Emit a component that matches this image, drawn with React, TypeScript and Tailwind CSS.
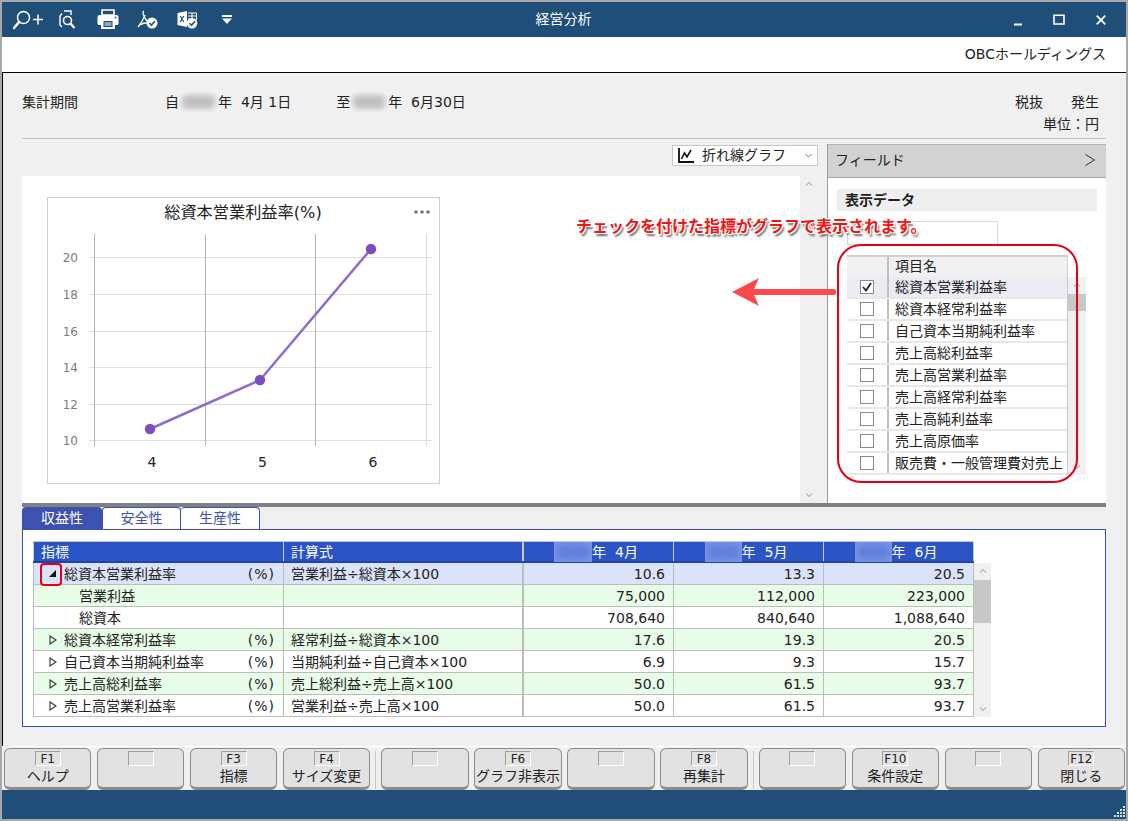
import React from 'react';

// ---- small helpers ----

function Blur({ width }: { width: string }) {
  return (
    <span className={`inline-block h-[20px] overflow-hidden bg-[#f5f5f5] align-middle ${width}`}>
      <span className="m-[3px] block h-[14px] bg-[#bdbdbd] blur-[3px]" />
    </span>
  );
}

function HeadBlur({ width }: { width: string }) {
  return (
    <span className={`inline-block h-[20px] overflow-hidden bg-[#7b95e4] align-middle ${width}`}>
      <span className="m-[3px] block h-[14px] bg-[#5f7fdc] blur-[3px]" />
    </span>
  );
}

function ScrollBar({ thumbTop, thumbHeight, width }: { thumbTop: number; thumbHeight: number; width: string }) {
  return (
    <div className={`relative h-full shrink-0 bg-[#f0f0f0] ${width}`}>
      <svg className="absolute left-1/2 top-[5px] -ml-[4px]" width="8" height="6" viewBox="0 0 8 6">
        <path d="M1 4.5 L4 1.5 L7 4.5" fill="none" stroke="#b4b4b4" strokeWidth="1.2" />
      </svg>
      {thumbHeight > 0 && (
        <div className="absolute left-0 right-0 bg-[#c8c8c8]" style={{ top: thumbTop, height: thumbHeight }} />
      )}
      <svg className="absolute bottom-[5px] left-1/2 -ml-[4px]" width="8" height="6" viewBox="0 0 8 6">
        <path d="M1 1.5 L4 4.5 L7 1.5" fill="none" stroke="#b4b4b4" strokeWidth="1.2" />
      </svg>
    </div>
  );
}

// ---- title bar icons ----

function TitleIcons() {
  return (
    <div className="flex flex-1 basis-0 items-center pl-[11px]">
      <svg width="31" height="22" viewBox="0 0 31 22" fill="none" stroke="#fff">
        <circle cx="10.5" cy="8.5" r="6" strokeWidth="1.5" />
        <path d="M6 13 L1 19" strokeWidth="2.6" strokeLinecap="round" />
        <path d="M20 10.5 H30 M25 5.5 V15.5" strokeWidth="1.5" />
      </svg>
      <svg className="ml-[15px]" width="17" height="20" viewBox="0 0 17 20" fill="none" stroke="#fff">
        <path d="M5 1 H12 V5 M3 3.5 L1 6 V15 L3 17" strokeWidth="1.4" />
        <circle cx="8.5" cy="10.5" r="4" strokeWidth="1.6" />
        <path d="M11.5 13.5 L15.5 18" strokeWidth="2.2" />
      </svg>
      <svg className="ml-[21px]" width="22" height="21" viewBox="0 0 22 21">
        <path d="M5 1 H17 V6 H5 Z" fill="none" stroke="#fff" strokeWidth="1.6" />
        <path d="M2.5 6 H19.5 Q21.5 6 21.5 8 V15 Q21.5 16 19.5 16 H18 V20 H4 V16 H2.5 Q0.5 16 0.5 15 V8 Q0.5 6 2.5 6 Z" fill="#fff" />
        <path d="M6.5 12 H15.5 V18 H6.5 Z" fill="#1f4e79" />
        <path d="M7.5 14 H14.5 M7.5 16 H14.5" stroke="#fff" strokeWidth="1" />
        <circle cx="18.5" cy="8.5" r="0.9" fill="#1f4e79" />
      </svg>
      <svg className="ml-[18px]" width="21" height="19" viewBox="0 0 21 19" fill="none">
        <path d="M7 1 Q5 2 7 6 Q9 11 13 13 M8 5 Q6 11 1 17 M3 15 Q8 12 13 13" stroke="#fff" strokeWidth="1.3" />
        <circle cx="15" cy="13" r="5.5" fill="#fff" />
        <path d="M12.5 13 L14.5 15 L18 11.2" stroke="#1f4e79" strokeWidth="1.6" />
      </svg>
      <svg className="ml-[19px]" width="21" height="19" viewBox="0 0 21 19">
        <path d="M0.5 3 L10 1 V17 L0.5 15 Z" fill="#fff" />
        <path d="M3.3 6 L6.7 12 M6.7 6 L3.3 12" stroke="#1f4e79" strokeWidth="1.2" />
        <path d="M11 3 H19.5 V10 M11 6 H19 M11 9 H15 M15 3 V9" stroke="#fff" strokeWidth="1" fill="none" />
        <circle cx="15" cy="13.2" r="5.3" fill="#fff" />
        <path d="M12.5 13.2 L14.5 15.2 L18 11.4" stroke="#1f4e79" strokeWidth="1.6" fill="none" />
      </svg>
      <svg className="ml-[24px]" width="10" height="9" viewBox="0 0 10 9">
        <path d="M0 0 H10 V2 H0 Z M0 3.5 H10 L5 9 Z" fill="#fff" />
      </svg>
    </div>
  );
}

function WindowButtons() {
  return (
    <div className="flex flex-1 basis-0 items-center justify-end pr-[20px]">
      <svg width="8" height="12" viewBox="0 0 8 12">
        <path d="M0 10.5 H8" stroke="#fff" strokeWidth="2" />
      </svg>
      <svg className="ml-[31px]" width="12" height="11" viewBox="0 0 12 11">
        <path d="M1 1.2 H11 V10 H1 Z" fill="none" stroke="#fff" strokeWidth="1.6" />
      </svg>
      <svg className="ml-[31px]" width="10" height="10" viewBox="0 0 10 10">
        <path d="M0.7 0.7 L9.3 9.3 M9.3 0.7 L0.7 9.3" stroke="#fff" strokeWidth="1.8" />
      </svg>
    </div>
  );
}

// ---- chart ----

const yTicks = [
  { label: '20', y: 60 },
  { label: '18', y: 97 },
  { label: '16', y: 134 },
  { label: '14', y: 170 },
  { label: '12', y: 207 },
  { label: '10', y: 243 },
];

function Chart() {
  return (
    <div className="ml-[25px] mt-[21px] h-[287px] w-[393px] border border-[#cfcfcf] bg-white">
      <svg width="391" height="285" viewBox="1 1 391 285">
        <text x="196" y="21" textAnchor="middle" fontSize="16.2" fill="#222">総資本営業利益率(%)</text>
        <circle cx="369" cy="15" r="1.8" fill="#777" />
        <circle cx="375" cy="15" r="1.8" fill="#777" />
        <circle cx="381" cy="15" r="1.8" fill="#777" />
        {yTicks.map((t) => (
          <g key={t.label}>
            <line x1="42" x2="385" y1={t.y + 0.5} y2={t.y + 0.5} stroke="#dedede" strokeWidth="1.2" />
            <text x="31" y={t.y + 5} textAnchor="end" fontSize="12" fill="#807a78">{t.label}</text>
          </g>
        ))}
        {[47.5, 158.5, 268.5].map((x) => (
          <line key={x} x1={x} x2={x} y1="37" y2="249" stroke="#b4b4b4" />
        ))}
        <line x1="379.5" x2="379.5" y1="37" y2="249" stroke="#dcdcdc" />
        <polyline points="103,232 213,183 324,52" fill="none" stroke="#8f6bd0" strokeWidth="2.5" />
        <circle cx="103" cy="232" r="5.2" fill="#7d4dc0" />
        <circle cx="213" cy="183" r="5.2" fill="#7d4dc0" />
        <circle cx="324" cy="52" r="5.2" fill="#7d4dc0" />
        <text x="105" y="270" textAnchor="middle" fontSize="14" fill="#222">4</text>
        <text x="215.5" y="270" textAnchor="middle" fontSize="14" fill="#222">5</text>
        <text x="326" y="270" textAnchor="middle" fontSize="14" fill="#222">6</text>
      </svg>
    </div>
  );
}

// ---- field panel ----

const fieldItems = [
  '総資本営業利益率',
  '総資本経常利益率',
  '自己資本当期純利益率',
  '売上高総利益率',
  '売上高営業利益率',
  '売上高経常利益率',
  '売上高純利益率',
  '売上高原価率',
  '販売費・一般管理費対売上',
];

function FieldPanel() {
  return (
    <div className="mt-[5px] flex h-[359px] w-[279px] flex-col border-l border-[#9a9a9a] bg-white">
      <div className="flex h-[34px] shrink-0 items-center justify-between border-y border-t-[#b5b5b5] border-b-[#a8a8a8] bg-[#d2d2d2] pb-[2px] pl-[7px] pr-[11px]">
        <span>フィールド</span>
        <svg width="10" height="12" viewBox="0 0 10 12">
          <path d="M0.5 0.5 L9.5 6 L0.5 11.5" fill="none" stroke="#333" strokeWidth="1" />
        </svg>
      </div>
      <div className="mx-[9px] mt-[11px] flex h-[22px] w-[260px] items-center bg-[#eeeeee] pl-[8px] font-bold">表示データ</div>
      <div className="ml-[19px] mt-[10px] h-[24px] w-[151px] border border-[#d8d8d8] bg-white" />
      <div className="ml-[19px] mt-[10px] w-[239px]">
        <div className="flex h-[22px] w-[221px] border-r border-t-2 border-[#d0d0d0] bg-[#f0f0f0] leading-[18px]">
          <div className="w-[42px] border-r-2 border-[#c0c0c0]" />
          <div className="pl-[6px]">項目名</div>
        </div>
        <div className="flex h-[198px]">
          <div className="w-[221px] border-r border-[#c8c8c8]">
            {fieldItems.map((name, i) => (
              <div
                key={name}
                className={`flex h-[22px] border-b-2 border-[#e8e8e8] ${i === 0 ? 'bg-[#ebebf3]' : 'bg-white'}`}
              >
                <div className="flex w-[42px] items-center justify-center border-r-2 border-[#c0c0c0]">
                  <span className="flex h-[14px] w-[14px] items-center justify-center border border-[#8a8a8a] bg-white">
                    {i === 0 && (
                      <svg width="10" height="10" viewBox="0 0 10 10">
                        <path d="M1 5 L4 8.5 L9 1" fill="none" stroke="#222" strokeWidth="1.8" />
                      </svg>
                    )}
                  </span>
                </div>
                <div className="flex-1 overflow-hidden whitespace-nowrap pl-[6px] leading-[20px]">{name}</div>
              </div>
            ))}
          </div>
          <ScrollBar thumbTop={17} thumbHeight={17} width="w-[18px]" />
        </div>
      </div>
    </div>
  );
}

// ---- lower grid ----

type RowData = {
  name: string;
  unit?: string;
  formula?: string;
  values: string[];
  indent?: boolean;
  open?: boolean;
  bg: string;
};

const rows: RowData[] = [
  { name: '総資本営業利益率', unit: '(%)', formula: '営業利益÷総資本×100', values: ['10.6', '13.3', '20.5'], open: true, bg: 'bg-[#dbe3fa]' },
  { name: '営業利益', values: ['75,000', '112,000', '223,000'], indent: true, bg: 'bg-[#e8fde8]' },
  { name: '総資本', values: ['708,640', '840,640', '1,088,640'], indent: true, bg: 'bg-white' },
  { name: '総資本経常利益率', unit: '(%)', formula: '経常利益÷総資本×100', values: ['17.6', '19.3', '20.5'], bg: 'bg-[#e8fde8]' },
  { name: '自己資本当期純利益率', unit: '(%)', formula: '当期純利益÷自己資本×100', values: ['6.9', '9.3', '15.7'], bg: 'bg-white' },
  { name: '売上高総利益率', unit: '(%)', formula: '売上総利益÷売上高×100', values: ['50.0', '61.5', '93.7'], bg: 'bg-[#e8fde8]' },
  { name: '売上高営業利益率', unit: '(%)', formula: '営業利益÷売上高×100', values: ['50.0', '61.5', '93.7'], bg: 'bg-white' },
];

function GridRow({ row }: { row: RowData }) {
  return (
    <div className={`flex h-[22px] border-b border-[#bcbcbc] leading-[22px] ${row.bg}`}>
      <div className="flex w-[251px] items-center border-x border-[#bcbcbc] pr-[8px]">
        {row.indent ? (
          <span className="pl-[45px]">{row.name}</span>
        ) : (
          <>
            <span className="flex w-[30px] justify-end pr-[7px]">
              {row.open ? (
                <svg width="9" height="9" viewBox="0 0 9 9"><path d="M8 1 V8 H1 Z" fill="#111" /></svg>
              ) : (
                <svg width="8" height="10" viewBox="0 0 8 10"><path d="M1 1 L7 5 L1 9 Z" fill="none" stroke="#333" strokeWidth="1.1" /></svg>
              )}
            </span>
            <span>{row.name}</span>
            <span className="ml-auto tracking-[1px]">{row.unit}</span>
          </>
        )}
      </div>
      <div className="w-[240px] border-r-2 border-[#bcbcbc] pl-[7px]">{row.formula}</div>
      {row.values.map((v, i) => (
        <div key={i} className="w-[150px] border-r border-[#bcbcbc] pr-[8px] text-right">{v}</div>
      ))}
    </div>
  );
}

function DataGrid() {
  const months = [
    { blur: 'w-[38px]', label: '年  4月' },
    { blur: 'w-[37px]', label: '年  5月' },
    { blur: 'w-[37px]', label: '年  6月' },
  ];
  return (
    <div className="w-[958px]">
      <div className="flex h-[22px] w-[941px] border-b-2 border-t border-b-[#2243a8] border-t-[#c8c8c8] bg-[#2b55c4] leading-[20px] text-white">
        <div className="w-[251px] border-x border-x-[#c8c8c8] pl-[7px]">指標</div>
        <div className="w-[240px] border-r-2 border-[#c8c8c8] pl-[7px]">計算式</div>
        {months.map((m) => (
          <div key={m.label} className="flex w-[150px] items-center justify-center whitespace-pre border-r border-[#c8c8c8] pr-[5px]">
            <HeadBlur width={m.blur} />
            <span>{m.label}</span>
          </div>
        ))}
      </div>
      <div className="flex h-[154px]">
        <div className="w-[941px]">
          {rows.map((r) => (
            <GridRow key={r.name} row={r} />
          ))}
        </div>
        <ScrollBar thumbTop={17} thumbHeight={43} width="w-[17px]" />
      </div>
    </div>
  );
}

// ---- function keys ----

function FKey({ code, label }: { code?: string; label?: string }) {
  return (
    <button className="flex h-[42px] flex-1 basis-0 flex-col items-center overflow-hidden whitespace-nowrap rounded-[6px] border border-b-[3px] border-[#8c8c8c] bg-[#e2e2e2] pt-[2px] text-[#222]">
      <span className="flex h-[15px] w-[26px] shrink-0 items-center justify-center border border-b-white border-r-white border-l-[#a0a0a0] border-t-[#a0a0a0] text-[12px] leading-none">
        {code}
      </span>
      <span className="leading-[20px]">{label}</span>
    </button>
  );
}

const Sep = () => <div className="mx-[5px] mt-[3px] h-[38px] w-px shrink-0 bg-[#c8c8c8]" />;

export default function App() {
  return (
    <div className="relative flex h-[821px] w-[1128px] flex-col overflow-hidden border-2 border-[#a8a8a8] bg-[#f0f0f0] font-['DejaVu_Sans','Noto_Sans_CJK_JP',sans-serif] text-[14px] text-[#222]">
      {/* title bar */}
      <div className="flex h-[35px] shrink-0 items-center bg-[#1f4e79] text-white">
        <TitleIcons />
        <div className="pl-[8px] text-[14px]">経営分析</div>
        <WindowButtons />
      </div>

      {/* company */}
      <div className="flex h-[36px] shrink-0 items-center justify-end border-b border-black bg-white pr-[20px]">
        OBCホールディングス
      </div>

      {/* body */}
      <div className="flex flex-1 flex-col border-l border-black pl-[19px] pr-[20px]">
        {/* period */}
        <div className="flex h-[66px] shrink-0 border-b border-[#c4c4c4] pt-[18px]">
          <div className="w-[143px] leading-[22px]">集計期間</div>
          <div className="flex h-[22px] items-center whitespace-pre">
            <span>自</span>
            <Blur width="w-[39px]" />
            <span>年  4月 1日</span>
            <span className="ml-[45px]">至</span>
            <Blur width="w-[38px]" />
            <span>年  6月30日</span>
          </div>
          <div className="ml-auto pr-[7px] text-right leading-[22px]">
            <div className="flex gap-[28px]">
              <span>税抜</span>
              <span>発生</span>
            </div>
            <div>単位：円</div>
          </div>
        </div>

        {/* chart + field panel */}
        <div className="flex h-[364px] shrink-0">
          <div className="w-[805px]">
            <div className="flex h-[37px] justify-end pr-[9px] pt-[6px]">
              <div className="flex h-[21px] w-[146px] items-center border border-[#c8c8c8] bg-white pl-[5px] pr-[5px]">
                <svg width="16" height="15" viewBox="0 0 16 15" fill="none" stroke="#111">
                  <path d="M1 0 V14 H16" strokeWidth="1.8" />
                  <path d="M3.5 11 L6.5 5 L9 9 L13 2" strokeWidth="1.6" />
                </svg>
                <span className="ml-[8px]">折れ線グラフ</span>
                <svg className="ml-auto" width="7" height="5" viewBox="0 0 7 5">
                  <path d="M0.5 1 L3.5 4 L6.5 1" fill="none" stroke="#777" strokeWidth="1" />
                </svg>
              </div>
            </div>
            <div className="flex h-[327px]">
              <div className="w-[778px] bg-white">
                <Chart />
              </div>
              <ScrollBar thumbTop={0} thumbHeight={0} width="w-[18px]" />
            </div>
          </div>
          <FieldPanel />
        </div>

        {/* splitter */}
        <div className="h-[4px] shrink-0 bg-[#808080]" />

        {/* tabs */}
        <div className="flex h-[22px] shrink-0 items-end">
          <div className="flex h-[22px] w-[80px] items-center justify-center rounded-t-[4px] bg-[#3c51b0] text-white">収益性</div>
          <div className="flex h-[22px] w-[79px] items-center justify-center rounded-t-[4px] border border-b-0 border-[#3c51b0] bg-white text-[#3c51b0]">安全性</div>
          <div className="flex h-[22px] w-[79px] items-center justify-center rounded-t-[4px] border border-b-0 border-l-0 border-[#3c51b0] bg-white text-[#3c51b0]">生産性</div>
        </div>
        <div className="h-[198px] shrink-0 border border-[#3c51b0] bg-white pl-[10px] pt-[11px]">
          <DataGrid />
        </div>
      </div>

      {/* function keys */}
      <div className="flex h-[44px] shrink-0 border-t border-white pl-[2px] pr-[1px] pt-[1px]">
        <div className="flex flex-1 gap-[5.5px]">
          <FKey code="F1" label="ヘルプ" />
          <FKey />
          <FKey code="F3" label="指標" />
          <FKey code="F4" label="サイズ変更" />
        </div>
        <Sep />
        <div className="flex flex-1 gap-[5.5px]">
          <FKey />
          <FKey code="F6" label="グラフ非表示" />
          <FKey />
          <FKey code="F8" label="再集計" />
        </div>
        <Sep />
        <div className="flex flex-1 gap-[5.5px]">
          <FKey />
          <FKey code="F10" label="条件設定" />
          <FKey />
          <FKey code="F12" label="閉じる" />
        </div>
      </div>

      {/* status bar */}
      <div className="relative h-[29px] shrink-0 bg-[#1f4e79]">
        <svg className="absolute bottom-[1px] right-[1px]" width="12" height="12" viewBox="0 0 12 12" fill="#d8e0e8">
          <path d="M10 0h2v2h-2z M7 3h2v2H7z M10 3h2v2h-2z M4 6h2v2H4z M7 6h2v2H7z M10 6h2v2h-2z M1 9h2v2H1z M4 9h2v2H4z M7 9h2v2H7z M10 9h2v2h-2z" />
        </svg>
      </div>

      {/* annotations drawn over the screen */}
      <div className="absolute left-[574px] top-[213px] whitespace-nowrap text-[16px] font-bold text-[#f01414] [text-shadow:-1px_-1px_0_#fff,1px_-1px_0_#fff,-1px_1px_0_#fff,1px_1px_0_#fff,2px_3px_2px_#666]">
        チェックを付けた指標がグラフで表示されます。
      </div>
      <div className="absolute left-[835px] top-[242px] h-[239px] w-[241px] rounded-[24px] border-2 border-[#e60012]" />
      <svg className="absolute left-[730px] top-[276px]" width="106" height="30" viewBox="0 0 106 30">
        <path d="M0 14 L27 0 L22 11 H102 Q104 11 104 14 Q104 17 102 17 H22 L27 28 Z" fill="#fb4a4c" />
      </svg>
      <div className="absolute left-[38px] top-[561px] h-[23px] w-[22px] rounded-[4px] border-2 border-[#e60012]" />
    </div>
  );
}
